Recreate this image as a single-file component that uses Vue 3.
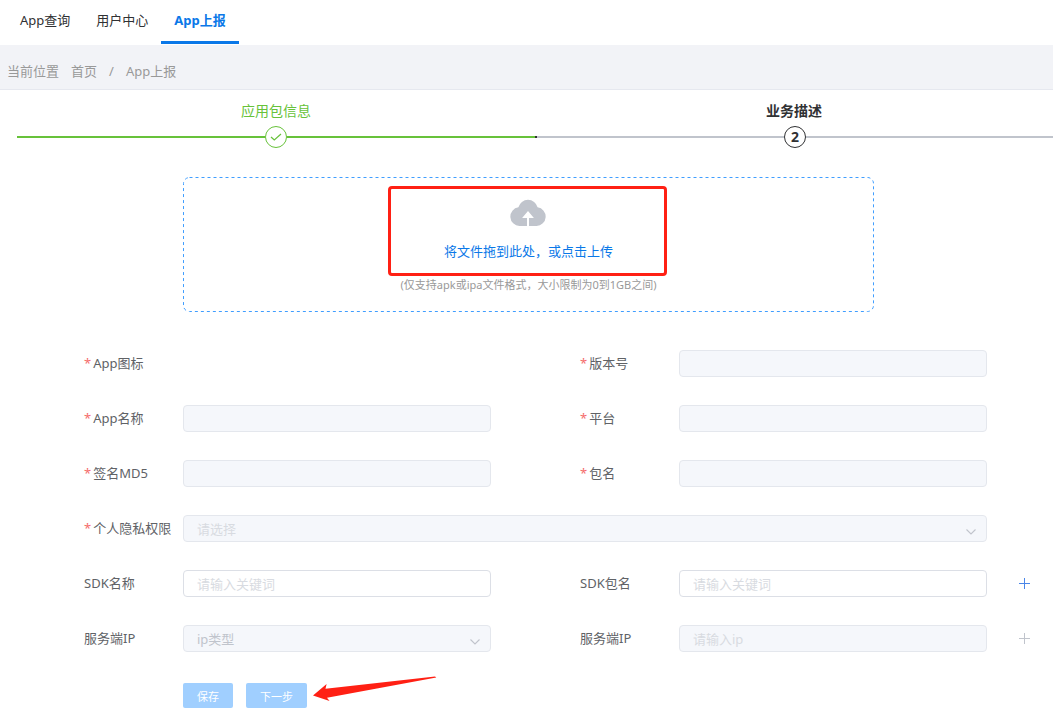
<script setup>
import { ref } from "vue";

const tabs = ["App查询", "用户中心", "App上报"];
const activeTab = ref("App上报");

const steps = [
  { title: "应用包信息", status: "success" },
  { title: "业务描述", status: "process" },
];

const rows = [
  [
    { id: "icon", label: "App图标", required: true, type: "none" },
    { id: "version", label: "版本号", required: true, disabled: true },
  ],
  [
    { id: "name", label: "App名称", required: true, disabled: true },
    { id: "platform", label: "平台", required: true, disabled: true },
  ],
  [
    { id: "md5", label: "签名MD5", required: true, disabled: true },
    { id: "package", label: "包名", required: true, disabled: true },
  ],
  [{ id: "privacy", label: "个人隐私权限", required: true, disabled: true, type: "select", placeholder: "请选择", light: true }],
  [
    { id: "sdkName", label: "SDK名称", placeholder: "请输入关键词" },
    { id: "sdkPackage", label: "SDK包名", placeholder: "请输入关键词", add: "active" },
  ],
  [
    { id: "ipType", label: "服务端IP", disabled: true, type: "select", placeholder: "ip类型" },
    { id: "ip", label: "服务端IP", disabled: true, placeholder: "请输入ip", add: "disabled" },
  ],
];

const addState = (row) => row[row.length - 1].add;
</script>

<template>
  <div class="page">
    <nav class="nav">
      <a
        v-for="tab in tabs"
        :key="tab"
        href="#"
        class="nav-item"
        :class="{ active: tab === activeTab }"
        @click.prevent="activeTab = tab"
      >{{ tab }}</a>
    </nav>

    <div class="breadcrumb">
      <span>当前位置</span>
      <a href="#">首页</a>
      <span>/</span>
      <span>App上报</span>
    </div>

    <div class="steps">
      <div v-for="(step, i) in steps" :key="step.title" class="step" :class="step.status">
        <div class="step-title">{{ step.title }}</div>
        <div class="step-head">
          <span class="step-line start"></span>
          <span class="step-icon">
            <svg v-if="step.status === 'success'" width="12" height="10" viewBox="0 0 12 10">
              <path d="M1 5l3.3 3L11 2" fill="none" stroke="currentColor" stroke-width="1.2" />
            </svg>
            <template v-else>{{ i + 1 }}</template>
          </span>
          <span class="step-line"></span>
        </div>
      </div>
    </div>

    <div class="upload">
      <svg class="upload-border">
        <rect x="0.5" y="0.5" rx="6" />
      </svg>
      <button type="button" class="upload-btn">
        <svg width="36" height="27" viewBox="0 0 36 27">
          <path d="M9.5 27A9.4 9.4 0 0 1 8.4 8.3A9.9 9.9 0 0 1 27.6 8.3A9.4 9.4 0 0 1 26.5 27Z" fill="#c0c4cc" />
          <path d="M18 12l5.9 7h-4.9v8h-2v-8h-4.9z" fill="#fff" />
        </svg>
        <span>将文件拖到此处，或点击上传</span>
      </button>
      <div class="upload-tip">(仅支持apk或ipa文件格式，大小限制为0到1GB之间)</div>
      <span class="mark"></span>
    </div>
    <!-- ./upload -->

    <form class="form" @submit.prevent>
      <div v-for="(row, r) in rows" :key="r" class="row">
        <div class="fields">
          <div v-for="field in row" :key="field.id" class="field">
            <label :for="field.type === 'none' ? null : field.id">
              <i v-if="field.required">*</i>{{ field.label }}
            </label>
            <div v-if="field.type === 'select'" class="control select">
              <select :id="field.id" :disabled="field.disabled" :class="{ light: field.light }">
                <option>{{ field.placeholder }}</option>
              </select>
              <svg class="arrow" width="10" height="6" viewBox="0 0 10 6">
                <path d="M.5 .5L5 5L9.5 .5" fill="none" stroke="#c0c4cc" stroke-width="1.1" />
              </svg>
            </div>
            <div v-else-if="field.type !== 'none'" class="control">
              <input :id="field.id" type="text" :disabled="field.disabled" :placeholder="field.placeholder" />
            </div>
          </div>
        </div>
        <div class="extra">
          <button
            v-if="addState(row)"
            type="button"
            class="add"
            :disabled="addState(row) === 'disabled'"
            aria-label="添加"
          >
            <svg width="11" height="11" viewBox="0 0 11 11">
              <path d="M5.5 0v11M0 5.5h11" stroke="currentColor" />
            </svg>
          </button>
        </div>
      </div>

      <div class="actions">
        <button type="button" disabled>保存</button>
        <button type="button" disabled>下一步</button>
        <svg class="pointer" width="124" height="26" viewBox="0 0 124 26">
          <path d="M0 19.5L13.6 8L12.5 12.7L122 .6L123.3 1.4L14 21.8L16.6 25Z" fill="#ff2014" />
        </svg>
      </div>
    </form>
  </div>
</template>

<style>
body {
  margin: 0;
  background: #fff;
}
</style>

<style scoped>
.page {
  font-family: "Noto Sans", "Noto Sans CJK SC", sans-serif;
  font-size: 13px;
  line-height: 18px;
  color: #606266;
}

a {
  color: inherit;
  text-decoration: none;
}

button,
input,
select {
  font-family: inherit;
  box-sizing: border-box;
}

.nav {
  display: flex;
  height: 45px;
  padding-left: 7px;
}

.nav-item {
  box-sizing: border-box;
  height: 44px;
  padding: 0 13px;
  line-height: 41px;
  color: #303133;
  border-bottom: 3px solid transparent;
}

.nav-item.active {
  color: #0a78e8;
  font-weight: bold;
  border-bottom-color: #0a78e8;
}

.breadcrumb {
  display: flex;
  gap: 12px;
  padding: 17px 7px 9px;
  color: #999;
  background: #f2f3f7;
  border-bottom: 1px solid #e6e8ef;
}

.steps {
  display: flex;
  padding: 12px 0 0 17px;
}

.step {
  flex: 1;
}

.step-title {
  margin-bottom: 6px;
  font-size: 14px;
  text-align: center;
}

.step-head {
  display: flex;
  align-items: center;
}

.step-line {
  flex: 1;
  height: 2px;
  background: #c0c4cc;
}

.step-icon {
  box-sizing: border-box;
  display: flex;
  align-items: center;
  justify-content: center;
  width: 22px;
  height: 22px;
  font-size: 14px;
  border: 1px solid currentColor;
  border-radius: 50%;
}

.success {
  color: #67c23a;
}

.success .step-line {
  background: #67c23a;
}

.process {
  color: #303133;
  font-weight: bold;
}

.process .start {
  box-sizing: border-box;
  border-left: 2px solid #303133;
}

/* upload */
.upload {
  position: relative;
  margin: 29px 179px 0 183px;
  padding: 22px 0 18px;
  text-align: center;
}

.upload-border {
  position: absolute;
  top: 0;
  left: 0;
  width: 100%;
  height: 100%;
  pointer-events: none;
}

.upload-border rect {
  width: calc(100% - 1px);
  height: calc(100% - 1px);
  fill: none;
  stroke: #409eff;
  stroke-dasharray: 3 3;
}

.upload-btn {
  display: flex;
  flex-direction: column;
  align-items: center;
  gap: 16px;
  margin: 0 auto 16px;
  padding: 0;
  font-size: 13px;
  line-height: 18px;
  color: #0a78e8;
  background: none;
  border: none;
  cursor: pointer;
}

.upload-tip {
  font-size: 11px;
  color: #999;
}

.mark {
  position: absolute;
  top: 9px;
  left: 50%;
  box-sizing: border-box;
  width: 279px;
  height: 90px;
  margin-left: -141px;
  border: 3px solid #ff2014;
  border-radius: 4px;
  pointer-events: none;
}

/* form */
.form {
  display: flex;
  flex-direction: column;
  gap: 28px;
  margin-top: 38px;
  padding-left: 84px;
}

.row {
  display: flex;
}

.fields {
  display: flex;
  flex: 1;
  gap: 89px;
}

.field {
  display: flex;
  flex: 1;
  min-height: 27px;
}

label {
  width: 99px;
  line-height: 27px;
  white-space: nowrap;
}

label i {
  margin-right: 2px;
  font-style: normal;
  color: #f56c6c;
}

.control {
  flex: 1;
  position: relative;
}

.control input,
.control select {
  display: block;
  width: 100%;
  height: 27px;
  padding: 0 13px;
  font-size: 13px;
  color: #606266;
  background: #fff;
  border: 1px solid #dcdfe6;
  border-radius: 4px;
  outline: none;
  appearance: none;
}

.control input:disabled,
.control select:disabled {
  color: #c0c4cc;
  background: #f5f7fb;
  border-color: #e4e7ed;
  opacity: 1;
}

.control select.light:disabled,
.control input::placeholder {
  color: #d8dbe1;
}

.arrow {
  position: absolute;
  top: 14px;
  right: 11px;
  pointer-events: none;
}

.extra {
  box-sizing: border-box;
  display: flex;
  align-items: center;
  justify-content: center;
  width: 66px;
  padding-left: 9px;
}

.add {
  display: flex;
  padding: 0;
  color: #4a86e8;
  background: none;
  border: none;
}

.add:disabled {
  color: #c0c4cc;
}

.actions {
  position: relative;
  display: flex;
  gap: 13px;
  align-self: flex-start;
  margin-top: 3px;
  margin-left: 99px;
}

.actions button {
  height: 25px;
  padding: 0 14px;
  font-size: 11px;
  color: #fff;
  background: #a0cfff;
  border: none;
  border-radius: 2px;
}

.pointer {
  position: absolute;
  bottom: 6px;
  left: 100%;
  margin-left: 6px;
}
</style>
